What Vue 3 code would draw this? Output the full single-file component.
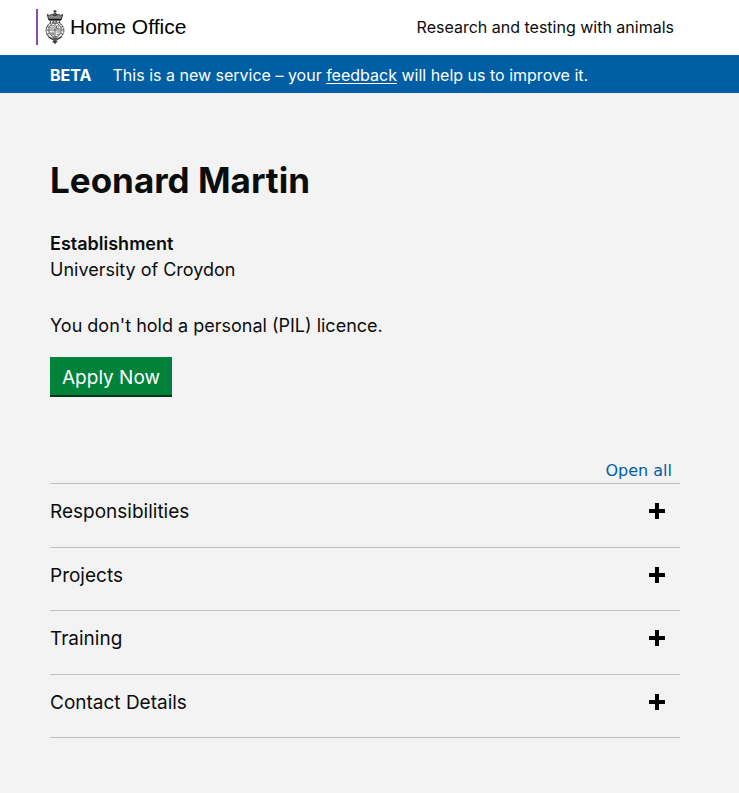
<script setup>
import { computed, ref } from 'vue'

const sections = ref([
  { id: 'responsibilities', title: 'Responsibilities', open: false },
  { id: 'projects', title: 'Projects', open: false },
  { id: 'training', title: 'Training', open: false },
  { id: 'contact', title: 'Contact Details', open: false },
])

const allOpen = computed(() => sections.value.every((s) => s.open))

function toggleAll() {
  const next = !allOpen.value
  sections.value.forEach((s) => { s.open = next })
}
</script>

<template>
  <div class="page">
    <header class="header">
      <a class="logo" href="#">
        <svg class="crest" viewBox="0 0 20 34" aria-hidden="true">
          <g fill="none" stroke="#333">
            <path d="M10 0v3M8.500 1.300h3" stroke-width="1.200" />
            <path d="M7.800 4.500q2.200-2.400 4.400 0v3H7.800z" fill="#555" stroke-width=".8" />
            <path d="M2.300 4.500l2.200 1 2-1.200 3.500 1.500 3.500-1.500 2 1.200 2.200-1-1.500 5.500H3.800z" fill="#888" stroke-width="1" />
            <path d="M4 9.600h12" stroke="#111" stroke-width="1.600" />
            <path d="M5.500 11v2.500M8.500 11v2.500M11.500 11v2.500M14.500 11v2.500" stroke-width=".9" />
            <ellipse cx="10" cy="20.500" rx="8.900" ry="8.600" fill="#eee" stroke="#555" stroke-width="1.100" stroke-dasharray="2.200 .7" />
            <ellipse cx="10" cy="20" rx="6.200" ry="7" fill="#fff" stroke-width=".8" />
            <path d="M10 13v14M4.200 20h11.600" stroke-width=".8" />
            <path d="M5.500 15.800h3.500M5 17.900h4M11.500 15.500v3h3M13 15v2.500M11.500 22h3.500M11.500 24.300h2.500M6 21.800v2M8 21.500v4M6 24h3" stroke-width=".7" />
            <path d="M2 16l2 1.500M1.500 20h2M2 24.500l2.200-1.200M18 16l-2 1.500M18.500 20h-2M18 24.500l-2.200-1.200" stroke-width=".8" />
            <path d="M3.500 27l3.500 2 2 1 1 3.500 1-3.500 2-1 3.500-2M7.500 31.800h5" stroke-width="1.200" />
          </g>
          <path d="M7 27.500h6l-1.500 3h-3z" fill="#555" />
        </svg>
        <span>Home Office</span>
      </a>
      <a class="service" href="#">Research and testing with animals</a>
    </header>

    <div class="phase">
      <strong>BETA</strong>
      <span>This is a new service – your <a href="#">feedback</a> will help us to improve it.</span>
    </div>

    <main class="main">
      <h1>Leonard Martin</h1>
      <dl class="details">
        <dt>Establishment</dt>
        <dd>University of Croydon</dd>
      </dl>
      <p class="licence">You don't hold a personal (PIL) licence.</p>
      <button class="apply" type="button">Apply Now</button>

      <div class="controls">
        <button class="open-all" type="button" @click="toggleAll">{{ allOpen ? 'Close all' : 'Open all' }}</button>
      </div>
      <div class="accordion">
        <section v-for="s in sections" :key="s.id">
          <h2>
            <button type="button" :aria-expanded="s.open" @click="s.open = !s.open">
              <span>{{ s.title }}</span>
              <svg viewBox="0 0 16 16" aria-hidden="true">
                <path :d="s.open ? 'M0 6h16v4H0z' : 'M6 0h4v6h6v4h-6v6H6v-6H0V6h6z'" />
              </svg>
            </button>
          </h2>
        </section>
      </div>
    </main>
  </div>
</template>

<style>
body {
  margin: 0;
  background: #f3f3f3;
}
</style>

<style scoped>
.page {
  font-family: Inter, "Liberation Sans", sans-serif;
  font-weight: 400;
  color: #0b0c0c;
}

.header {
  display: flex;
  justify-content: space-between;
  align-items: center;
  box-sizing: border-box;
  height: 55px;
  padding: 0 65px 2px 36px;
  background: #fff;
}

.logo {
  display: flex;
  align-items: center;
  height: 36px;
  padding-left: 7px;
  border-left: 2px solid #8f4aa8;
  font: 21px/24px "Liberation Sans", sans-serif;
  color: #000;
  text-decoration: none;
}

.crest {
  width: 20px;
  height: 34px;
  margin-right: 5px;
}

.service {
  font-size: 16px;
  line-height: 20px;
  color: #0b0c0c;
  text-decoration: none;
}

.phase {
  display: flex;
  gap: 21px;
  padding: 10px 50px 8px;
  background: #005ea5;
  color: #fff;
  font-size: 16px;
  line-height: 20px;
}

.phase strong {
  font-weight: 700;
}

.phase a {
  color: #fff;
  text-decoration-thickness: 1px;
  text-underline-offset: 2px;
}

.main {
  padding: 63px 59px 55px 50px;
}

h1 {
  margin: 0;
  font-size: 35px;
  line-height: 48px;
  font-weight: 700;
}

.details {
  margin: 27px 0 0;
  font-size: 18px;
  line-height: 26px;
}

dt {
  font-weight: 600;
}

dd {
  margin: 0;
}

.licence {
  margin: 30px 0 0;
  font-size: 18px;
  line-height: 26px;
}

button {
  border: 0;
  background: none;
  color: inherit;
  font-family: inherit;
  cursor: pointer;
}

.apply {
  display: block;
  margin-top: 18px;
  padding: 9px 12px 5px;
  background: #00823b;
  box-shadow: 0 2px 0 #003618;
  color: #fff;
  font-size: 19px;
  line-height: 24px;
}

.controls {
  display: flex;
  justify-content: flex-end;
  margin-top: 64px;
}

.open-all {
  padding: 2px 8px;
  color: #005ea5;
  font: 16px/20px "DejaVu Sans", sans-serif;
}

.accordion {
  display: grid;
  grid-auto-rows: 1fr;
  min-height: 254px;
  border-top: 1px solid #bfc1c3;
}

section {
  border-bottom: 1px solid #bfc1c3;
}

h2 {
  margin: 0;
}

h2 button {
  display: flex;
  justify-content: space-between;
  align-items: center;
  width: 100%;
  padding: 14px 15px 14px 0;
  font-size: 19px;
  font-weight: 400;
  line-height: 24px;
  text-align: left;
}

h2 span {
  padding-top: 2px;
}

h2 svg {
  width: 16px;
  height: 16px;
}
</style>
